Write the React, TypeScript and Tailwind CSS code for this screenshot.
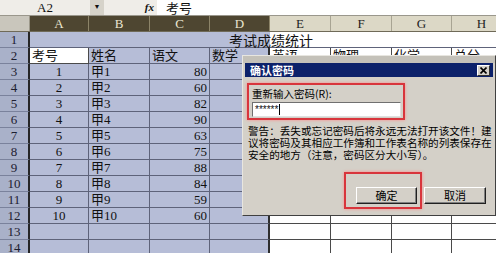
import React from 'react';

const font = "font-['Liberation_Serif','Noto_Sans_CJK_SC',serif]";
const uiFont = "font-['Noto_Sans_CJK_SC','Liberation_Sans',sans-serif]";

const colW = ['w-[59px]', 'w-[61px]', 'w-[60px]', 'w-[60px]', 'w-[61px]', 'w-[61px]', 'w-[60px]', 'w-[60px]'];
const letters = ['A', 'B', 'C', 'D', 'E', 'F', 'G', 'H'];

const scores = [80, 60, 82, 90, 63, 75, 88, 84, 59, 60];

const SEL = 'bg-[#b6bdd7] border-[#5e637a]';
const OUT = 'bg-white border-[#4a4a4a]';

function Cell({
  col,
  children,
  align = 'left',
  white,
}: {
  col: number;
  children?: React.ReactNode;
  align?: 'left' | 'center' | 'right';
  white?: boolean;
}) {
  const sel = col < 4 && !white;
  return (
    <div
      className={`${colW[col]} h-full shrink-0 overflow-hidden whitespace-nowrap border-r border-b px-[2px] ${
        sel ? SEL : OUT
      } ${col === 3 ? 'border-r-2 border-r-[#2e2e2e]' : ''} ${
        align === 'center' ? 'text-center' : align === 'right' ? 'text-right' : 'text-left'
      } ${white ? 'bg-white' : ''}`}
    >
      {children}
    </div>
  );
}

function RowHead({ n }: { n: number }) {
  return (
    <div className="flex h-full w-[30px] shrink-0 items-center justify-center border-r-2 border-b border-r-[#262626] border-b-[#7a829c] bg-[#a9b1c9] text-[#1d2030]">
      {n}
    </div>
  );
}

function Row({ n, cells }: { n: number; cells: React.ReactNode[] }) {
  return (
    <div className="flex h-[16px]">
      <RowHead n={n} />
      {cells}
    </div>
  );
}

function WinButton({ label, className = '' }: { label: string; className?: string }) {
  return (
    <div
      className={`flex h-[17px] items-center justify-center border border-t-white border-l-white border-r-[#202020] border-b-[#202020] bg-[#d4d0c8] text-[11px] text-black shadow-[inset_-1px_-1px_0_#808080] ${className}`}
    >
      {label}
    </div>
  );
}

export default function App() {
  const rows = scores.map((s, i) => (
    <Row
      key={i}
      n={i + 3}
      cells={[
        <Cell key="a" col={0} align="center">{i + 1}</Cell>,
        <Cell key="b" col={1}>甲{i + 1}</Cell>,
        <Cell key="c" col={2} align="right">{s}</Cell>,
        <Cell key="d" col={3} />,
        <Cell key="e" col={4} />,
        <Cell key="f" col={5} />,
        <Cell key="g" col={6} />,
        <Cell key="h" col={7} />,
      ]}
    />
  ));

  const emptyRow = (n: number) => (
    <Row key={n} n={n} cells={[0, 1, 2, 3, 4, 5, 6, 7].map((c) => <Cell key={c} col={c} />)} />
  );

  return (
    <div className={`relative h-[253px] w-[496px] overflow-hidden bg-white text-[13px] leading-[15px] text-[#111] ${font}`}>
      {/* formula bar */}
      <div className="flex h-[16px] border-b border-[#9a978c] bg-[#efede8]">
        <div className="w-[90px] text-center text-[13px] leading-[16px]">A2</div>
        <div className="flex w-[14px] items-center justify-center bg-[#d6d3ca]">
          <span className="text-[7px] leading-none">▼</span>
        </div>
        <div className="flex w-[53px] items-center justify-end pr-[3px] text-[11px] font-bold italic">fx</div>
        <div className={`flex-1 overflow-hidden bg-white pl-[9px] text-[13px] leading-[15px] ${uiFont}`}>考号</div>
      </div>

      {/* column headers */}
      <div className="flex h-[16px] border-b border-[#6f6a58]">
        <div className="w-[30px] shrink-0 border-r border-[#9c988a] bg-[#c9c6bc]" />
        {letters.map((l, i) => (
          <div
            key={l}
            className={`${colW[i]} shrink-0 border-r text-center leading-[15px] ${
              i < 4 ? 'border-[#8c8468] bg-[#4e4631] text-[#ebe6d2]' : 'border-[#a8a493] bg-[#dcd8c6] text-[#222]'
            }`}
          >
            {l}
          </div>
        ))}
      </div>

      {/* row 1 merged title */}
      <div className="flex h-[16px]">
        <RowHead n={1} />
        <div
          className={`w-[482px] shrink-0 border-b border-[#5e637a] bg-[linear-gradient(to_right,#b6bdd7_240px,#ffffff_240px)] text-center text-[14px] leading-[16px] ${uiFont}`}
        >
          考试成绩统计
        </div>
      </div>

      {/* row 2 headings */}
      <Row
        n={2}
        cells={[
          <Cell key="a" col={0} white>考号</Cell>,
          <Cell key="b" col={1}>姓名</Cell>,
          <Cell key="c" col={2}>语文</Cell>,
          <Cell key="d" col={3}>数学</Cell>,
          <Cell key="e" col={4}>英语</Cell>,
          <Cell key="f" col={5}>物理</Cell>,
          <Cell key="g" col={6}>化学</Cell>,
          <Cell key="h" col={7}>总分</Cell>,
        ]}
      />
      {rows}
      {emptyRow(13)}
      {emptyRow(14)}

      {/* dialog */}
      <div
        className={`absolute top-[55px] left-[242px] h-[161px] w-[254px] border border-t-[#e8e6e0] border-l-[#e8e6e0] border-r-[#404040] border-b-[#404040] bg-[#d4d0c8] ${uiFont}`}
      >
        <div className="h-[7px] bg-[#c4c1b9]" />
        <div className="mx-[2px] flex h-[14px] items-center justify-between bg-[#0c216a] pr-[3px] pl-[5px]">
          <span className="text-[11px] font-bold text-white">确认密码</span>
          <div className="flex h-[11px] w-[13px] items-center justify-center border border-t-white border-l-white border-r-[#303030] border-b-[#303030] bg-[#d4d0c8]">
            <svg width="7" height="7" viewBox="0 0 7 7">
              <path d="M0.5 0.5 L6.5 6.5 M6.5 0.5 L0.5 6.5" stroke="#000" strokeWidth="1.6" />
            </svg>
          </div>
        </div>

        <div className="mt-[6px] ml-[4px] h-[37px] w-[158px] border-2 border-[#d8353c] pl-[3px] shadow-[0_0_3px_#ff8a8a]">
          <div className="mt-[2px] h-[13px] text-[10.5px] leading-[13px] text-black">重新输入密码(R):</div>
          <div className="mt-[2px] flex h-[15px] w-[149px] items-center border border-t-[#707070] border-l-[#707070] border-r-[#e0e0e0] border-b-[#e0e0e0] bg-white pl-[2px] font-['Liberation_Sans',sans-serif] text-[10px] leading-none">
            ******
            <span className="ml-[1px] h-[11px] w-px bg-black" />
          </div>
        </div>

        <div className="mt-[5px] ml-[5px] h-[47px] text-[10.6px] leading-[12px] text-black">
          警告：丢失或忘记密码后将永远无法打开该文件！建
          <br />
          议将密码及其相应工作簿和工作表名称的列表保存在
          <br />
          安全的地方（注意，密码区分大小写）。
        </div>

        <div className="flex items-start">
          <div className="ml-[101px] h-[37px] w-[78px] border-2 border-[#d8353c] pt-[13px] pr-[3px] pb-[3px] pl-[10px] shadow-[0_0_3px_#ff8a8a]">
            <WinButton label="确定" className="w-[61px]" />
          </div>
          <WinButton label="取消" className="mt-[15px] ml-[2px] w-[62px]" />
        </div>
      </div>
    </div>
  );
}
